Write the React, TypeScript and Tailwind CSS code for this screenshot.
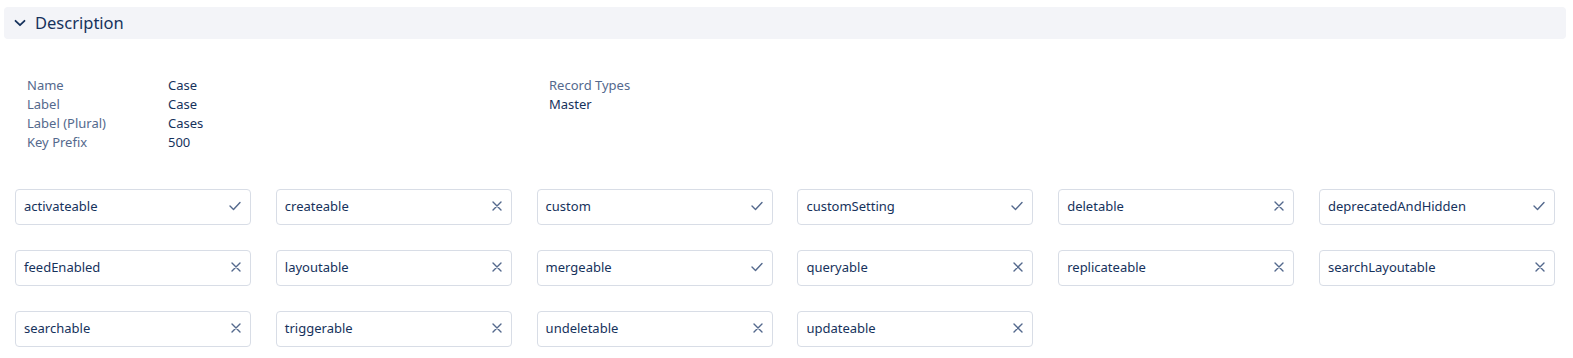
import React from 'react';

const fields: [string, string][] = [
    ['Name', 'Case'],
    ['Label', 'Case'],
    ['Label (Plural)', 'Cases'],
    ['Key Prefix', '500'],
];

const flags: [string, boolean][] = [
    ['activateable', true],
    ['createable', false],
    ['custom', true],
    ['customSetting', true],
    ['deletable', false],
    ['deprecatedAndHidden', true],
    ['feedEnabled', false],
    ['layoutable', false],
    ['mergeable', true],
    ['queryable', false],
    ['replicateable', false],
    ['searchLayoutable', false],
    ['searchable', false],
    ['triggerable', false],
    ['undeletable', false],
    ['updateable', false],
];

function Check() {
    return (
        <svg width="12" height="10" viewBox="0 0 12 10" fill="none" stroke="#54698d" strokeWidth="1.4" strokeLinecap="round" strokeLinejoin="round">
            <path d="M1 5l3.5 3.5L11 1.5" />
        </svg>
    );
}

function Cross() {
    return (
        <svg width="10" height="10" viewBox="0 0 10 10" fill="none" stroke="#54698d" strokeWidth="1.4" strokeLinecap="round">
            <path d="M1 1l8 8M9 1l-8 8" />
        </svg>
    );
}

export default function App() {
    return (
        <div className="w-[1573px] h-[358px] bg-white font-['Noto_Sans',sans-serif] text-[#16325c]">
            {/* Section header */}
            <div className="pt-[7px] pl-[4px]">
                <div className="w-[1562px] h-[32px] bg-[#f3f4f8] rounded-[4px] flex items-center pl-[9px]">
                    <svg width="14" height="14" viewBox="0 0 14 14" fill="none" stroke="#16325c" strokeWidth="1.8" strokeLinecap="round" strokeLinejoin="round">
                        <path d="M2.5 4.8L7 9.2l4.5-4.4" />
                    </svg>
                    <span className="ml-[8px] text-[16.5px] leading-none">Description</span>
                </div>
            </div>

            {/* Properties */}
            <div className="flex pl-[27px] pt-[37px]">
                <div className="w-[522px]">
                    {fields.map(([k, v]) => (
                        <div key={k} className="flex text-[13px] leading-[19px]">
                            <span className="w-[141px] text-[#54698d]">{k}</span>
                            <span>{v}</span>
                        </div>
                    ))}
                </div>
                <div className="text-[13px] leading-[19px]">
                    <div className="text-[#54698d]">Record Types</div>
                    <div>Master</div>
                </div>
            </div>

            {/* Flags */}
            <div className="grid grid-cols-[repeat(6,236px)] gap-x-[24.8px] gap-y-[25px] pl-[15px] pt-[37px]">
                {flags.map(([name, on]) => (
                    <div key={name} className="h-[36px] border border-[#d8dde6] rounded-[4px] flex items-center justify-between pl-[8px] pr-[9px]">
                        <span className="text-[13px]">{name}</span>
                        <span className="flex items-center -mt-[2px]">{on ? <Check /> : <Cross />}</span>
                    </div>
                ))}
            </div>
        </div>
    );
}
